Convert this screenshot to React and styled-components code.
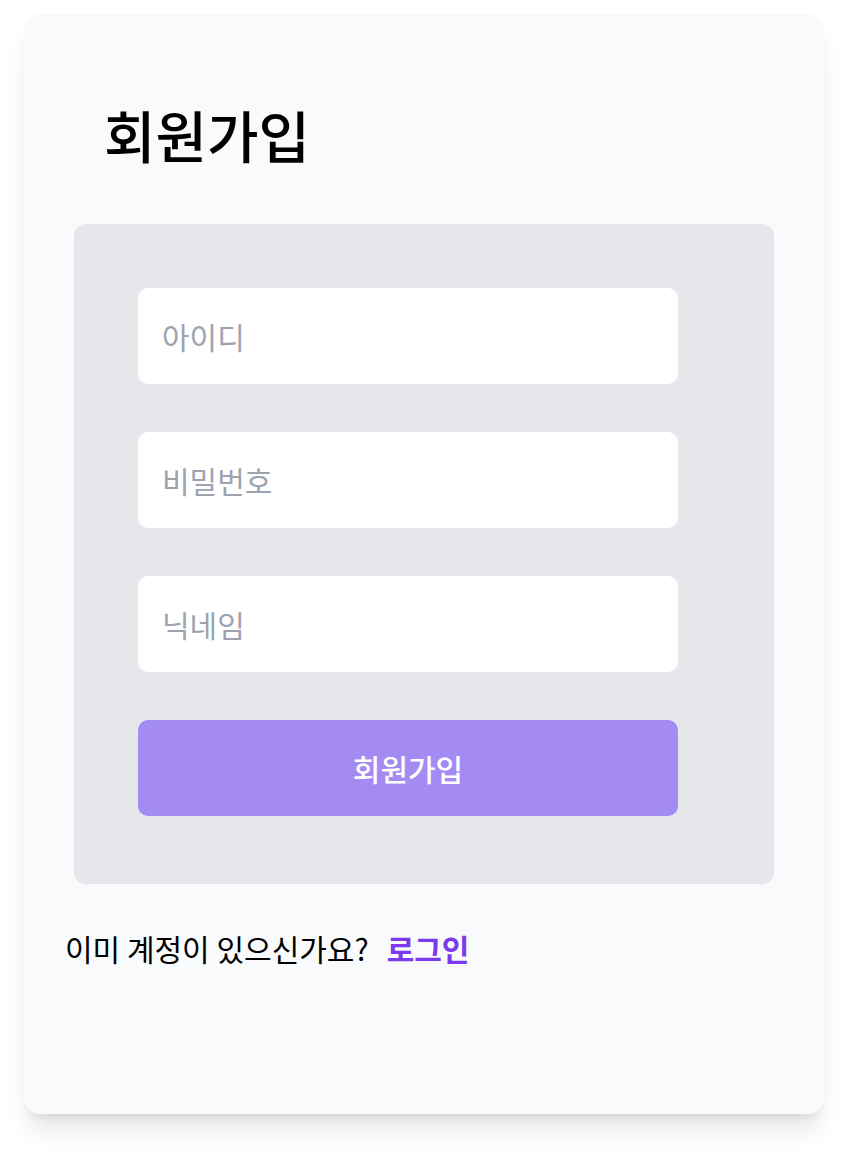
import React from "react";
import styled, { createGlobalStyle } from "styled-components";

const Global = createGlobalStyle`
  html, body { margin: 0; padding: 0; background: #ffffff; }
  body { font-family: "Noto Sans CJK KR", "Noto Sans", sans-serif; }
  * { box-sizing: border-box; }
`;

const Page = styled.div`
  padding: 14px 28px 40px 24px;
`;

const Card = styled.div`
  width: 800px;
  height: 1100px;
  background: #f9fafb;
  border-radius: 16px;
  box-shadow: 0 20px 25px -5px rgba(0, 0, 0, 0.1), 0 8px 10px -6px rgba(0, 0, 0, 0.1);
  padding: 0 50px;
  display: flex;
  flex-direction: column;
`;

const Title = styled.h1`
  margin: 0;
  padding: 92px 0 0 30px;
  height: 210px;
  font-size: 56px;
  font-weight: 500;
  line-height: 1;
  color: #000;
`;

const Panel = styled.form`
  width: 700px;
  background: #e5e7eb;
  border-radius: 12px;
  padding: 64px 96px 68px 64px;
  display: flex;
  flex-direction: column;
  gap: 48px;
`;

const Input = styled.input`
  width: 540px;
  height: 96px;
  border: none;
  outline: none;
  border-radius: 10px;
  background: #ffffff;
  padding: 0 24px;
  font-family: inherit;
  font-size: 30px;
  color: #111827;
  &::placeholder { color: #9ca3af; }
`;

const Button = styled.button`
  width: 540px;
  height: 96px;
  border: none;
  border-radius: 10px;
  background: #a38bf3;
  color: #ffffff;
  font-family: inherit;
  font-size: 30px;
  font-weight: 500;
  cursor: pointer;
`;

const Footer = styled.p`
  margin: 42px 0 0 -9px;
  font-size: 30px;
  color: #000;
  display: flex;
  align-items: center;
  gap: 18px;
`;

const LoginLink = styled.a`
  color: #7c3aed;
  font-weight: 700;
  text-decoration: none;
`;

export default function App() {
  return (
    <>
      <Global />
      <Page>
        <Card>
          <Title>회원가입</Title>
          <Panel onSubmit={(e) => e.preventDefault()}>
            <Input placeholder="아이디" />
            <Input type="password" placeholder="비밀번호" />
            <Input placeholder="닉네임" />
            <Button type="submit">회원가입</Button>
          </Panel>
          <Footer>
            이미 계정이 있으신가요?
            <LoginLink href="#">로그인</LoginLink>
          </Footer>
        </Card>
      </Page>
    </>
  );
}
